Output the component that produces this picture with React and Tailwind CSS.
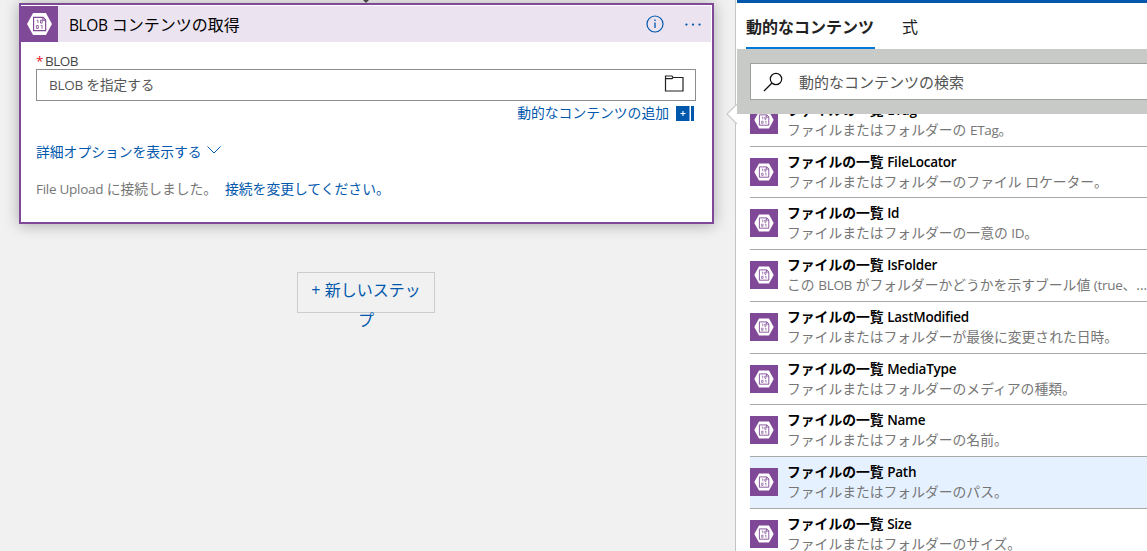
const items = [
  ['ETag', <>ファイルまたはフォルダーの <L>ETag</L>。</>],
  ['FileLocator', <>ファイルまたはフォルダーのファイル ロケーター。</>],
  ['Id', <>ファイルまたはフォルダーの一意の <L>ID</L>。</>],
  ['IsFolder', <>この <L>BLOB</L> がフォルダーかどうかを示すブール値 <L>(true</L>、...</>],
  ['LastModified', <>ファイルまたはフォルダーが最後に変更された日時。</>],
  ['MediaType', <>ファイルまたはフォルダーのメディアの種類。</>],
  ['Name', <>ファイルまたはフォルダーの名前。</>],
  ['Path', <>ファイルまたはフォルダーのパス。</>],
  ['Size', <>ファイルまたはフォルダーのサイズ。</>],
];

function L({ children }) {
  return <span className="text-[13.5px] tracking-[-0.28px]">{children}</span>;
}

function BlobIcon({ className }) {
  return (
    <svg viewBox="0 0 28 28" className={className}>
      <rect width="28" height="28" fill="#804998" />
      <path d="M4.3 14 9 5.5h10L23.7 14 19 22.5H9Z" fill="#fff" />
      <path d="M9.4 8.9h7.4l2 2v8.300h-9.400Z" fill="none" stroke="#804998" strokeWidth="0.9" />
      <path d="M16.600 8.900v2.200h2.200" fill="none" stroke="#804998" strokeWidth="0.800" />
      <path d="M11.800 11h1v2.300M14.800 11h1.300v2.300h-1.300ZM11.600 15.200h1.500v2.200h-1.500ZM15 15.200h1v2.500" fill="none" stroke="#804998" strokeWidth="0.650" />
    </svg>
  );
}

function StepCard() {
  return (
    <section className="ml-[19px] mt-[3px] h-[221px] w-[695px] border-2 border-[#804998] bg-white shadow-[0_1px_14px_rgba(0,0,0,0.3)]">
      <header className="mr-px mt-px flex h-9 items-center bg-[#ebe3f0]">
        <BlobIcon className="h-9 w-[37px] shrink-0 bg-[#804998]" />
        <h1 className="ml-[11px] flex-1 whitespace-nowrap pt-[2px] text-[16px] leading-[34px] text-black">
          <span className="text-[15.5px] tracking-[-0.4px]">BLOB</span> コンテンツの取得
        </h1>
        <svg className="mr-[20px] h-[18px] w-[18px]" viewBox="0 0 18 18" fill="none" stroke="#0058ad">
          <circle cx="9" cy="9" r="8" strokeWidth="1.2" />
          <path d="M9 7.500V13M9 4.500v1.500" strokeWidth="1.300" />
        </svg>
        <svg className="mr-[9px] h-4 w-[18px] pt-px" viewBox="0 0 18 16" fill="#0058ad">
          <circle cx="2" cy="8" r="1.200" />
          <circle cx="9" cy="8" r="1.200" />
          <circle cx="16" cy="8" r="1.200" />
        </svg>
      </header>
      <div className="pl-[15px] pr-4 pt-[10px]">
        <label className="flex h-[17px] items-center pt-[2px] text-[13.5px] tracking-[-0.5px] text-[#444]">
          <span className="mr-[2px] text-[#e81123]">*</span>BLOB
        </label>
        <div className="flex h-8 items-center border border-[#8c8c8c] pl-3 pr-[11px] text-[13.6px] text-[#555]">
          <span className="flex-1 whitespace-nowrap"><L>BLOB</L> を指定する</span>
          <svg className="mb-[3px] h-[17px] w-5" viewBox="0 0 20 17" fill="none" stroke="#222" strokeWidth="1.200">
            <path d="M1.500 1h6.500l1 1.500h10v13.500h-17.500ZM1.500 3.700h6.500l1-1.200" />
          </svg>
        </div>
        <div className="flex h-6 items-center justify-end pr-[2px] text-[13.8px] text-[#0058ad]">
          <span className="mr-[7px] whitespace-nowrap">動的なコンテンツの追加</span>
          <svg className="h-[15px] w-[18px]" viewBox="0 0 18 15">
            <path d="M0 0h13.500v15H0ZM15 0h3v15h-3Z" fill="#0058ad" />
            <path d="M7 5v5M4.500 7.500h5" stroke="#fff" strokeWidth="1.100" />
          </svg>
        </div>
        <div className="mt-4 flex h-[22px] items-center text-[13.8px] text-[#0058ad]">
          <span>詳細オプションを表示する</span>
          <svg className="mb-1 ml-[5px] h-2 w-[14px]" viewBox="0 0 14 8" fill="none" stroke="#0058ad">
            <path d="M0.500 0.500 7 7l6.500-6.500" />
          </svg>
        </div>
        <div className="mt-[15px] flex h-[22px] items-center whitespace-nowrap text-[13.8px] text-[#777]">
          <span className="w-[189px]"><L>File Upload</L> に接続しました。</span>
          <span className="text-[#0058ad]">接続を変更してください。</span>
        </div>
      </div>
    </section>
  );
}

function Row({ name, desc }) {
  return (
    <li className={'flex h-[51.720px] items-start border-b border-[#a9a9a9] pt-[11px] ' + (name === 'Path' ? 'bg-[#e5f1ff]' : '')}>
      <BlobIcon className="mr-[9px] h-7 w-7 shrink-0" />
      <div className="-mt-[6px] whitespace-nowrap text-[13.8px] leading-5">
        <p className="font-bold text-black">ファイルの一覧 <span className="text-[13.5px] font-semibold tracking-[-0.25px]">{name}</span></p>
        <p className="text-[#767676]">{desc}</p>
      </div>
    </li>
  );
}

export default function App() {
  return (
    <div className="relative flex h-[551px] w-[1147px] overflow-hidden bg-[#f1f1f1] font-['Open_Sans','Noto_Sans_CJK_JP',sans-serif]">
      <main className="w-[735px] shrink-0">
        <StepCard />
        <button className="ml-[297px] mt-12 block h-[41px] w-[138px] border border-[#ccc] px-2 text-center text-[16px] leading-[30px] text-[#0058ad]">
          <span className="block h-[39px] pt-[2px]">+ 新しいステッ<br />プ</span>
        </button>
      </main>
      <aside className="z-10 flex w-[412px] shrink-0 flex-col border-l border-[#c4c4c4] bg-white pl-px">
        <div className="h-[3px] shrink-0 bg-[#0058ad]" />
        <nav className="flex h-[46px] shrink-0 pl-[9px] text-[16px] leading-[48px] text-[#222]">
          <span className="h-[46px] w-[129px] whitespace-nowrap border-b-2 border-[#0078d7] font-bold">動的なコンテンツ</span>
          <span className="ml-[27px]">式</span>
        </nav>
        <div className="h-[65px] shrink-0 bg-[#c8cac7] pl-[13px] pt-[14px]">
          <div className="flex h-[37px] items-center border border-r-0 border-[#a0a0a0] bg-white pl-3 text-[15px] text-[#555]">
            <svg className="mr-4 h-5 w-5" viewBox="0 0 20 20" fill="none" stroke="#111" strokeWidth="1.200">
              <circle cx="13" cy="7" r="5.700" />
              <path d="m9 11-8 8" />
            </svg>
            <span className="pt-px">動的なコンテンツの検索</span>
          </div>
        </div>
        <div className="min-h-0 flex-1 overflow-hidden pl-[13px]">
          <ul className="-mt-[19px]">
            {items.map(([name, desc]) => <Row key={name} name={name} desc={desc} />)}
          </ul>
        </div>
      </aside>
      <svg className="absolute left-[726px] top-[103px] z-20 h-[22px] w-[11px]" viewBox="0 0 11 22">
        <path d="M11 1 1 11l10 10" fill="#fff" stroke="#ccc" strokeWidth="1.300" />
      </svg>
      <svg className="absolute left-[362px] top-0 h-[3px] w-2" viewBox="0 0 8 3">
        <path d="M1 0h6L4 3Z" fill="#444" />
      </svg>
    </div>
  );
}
